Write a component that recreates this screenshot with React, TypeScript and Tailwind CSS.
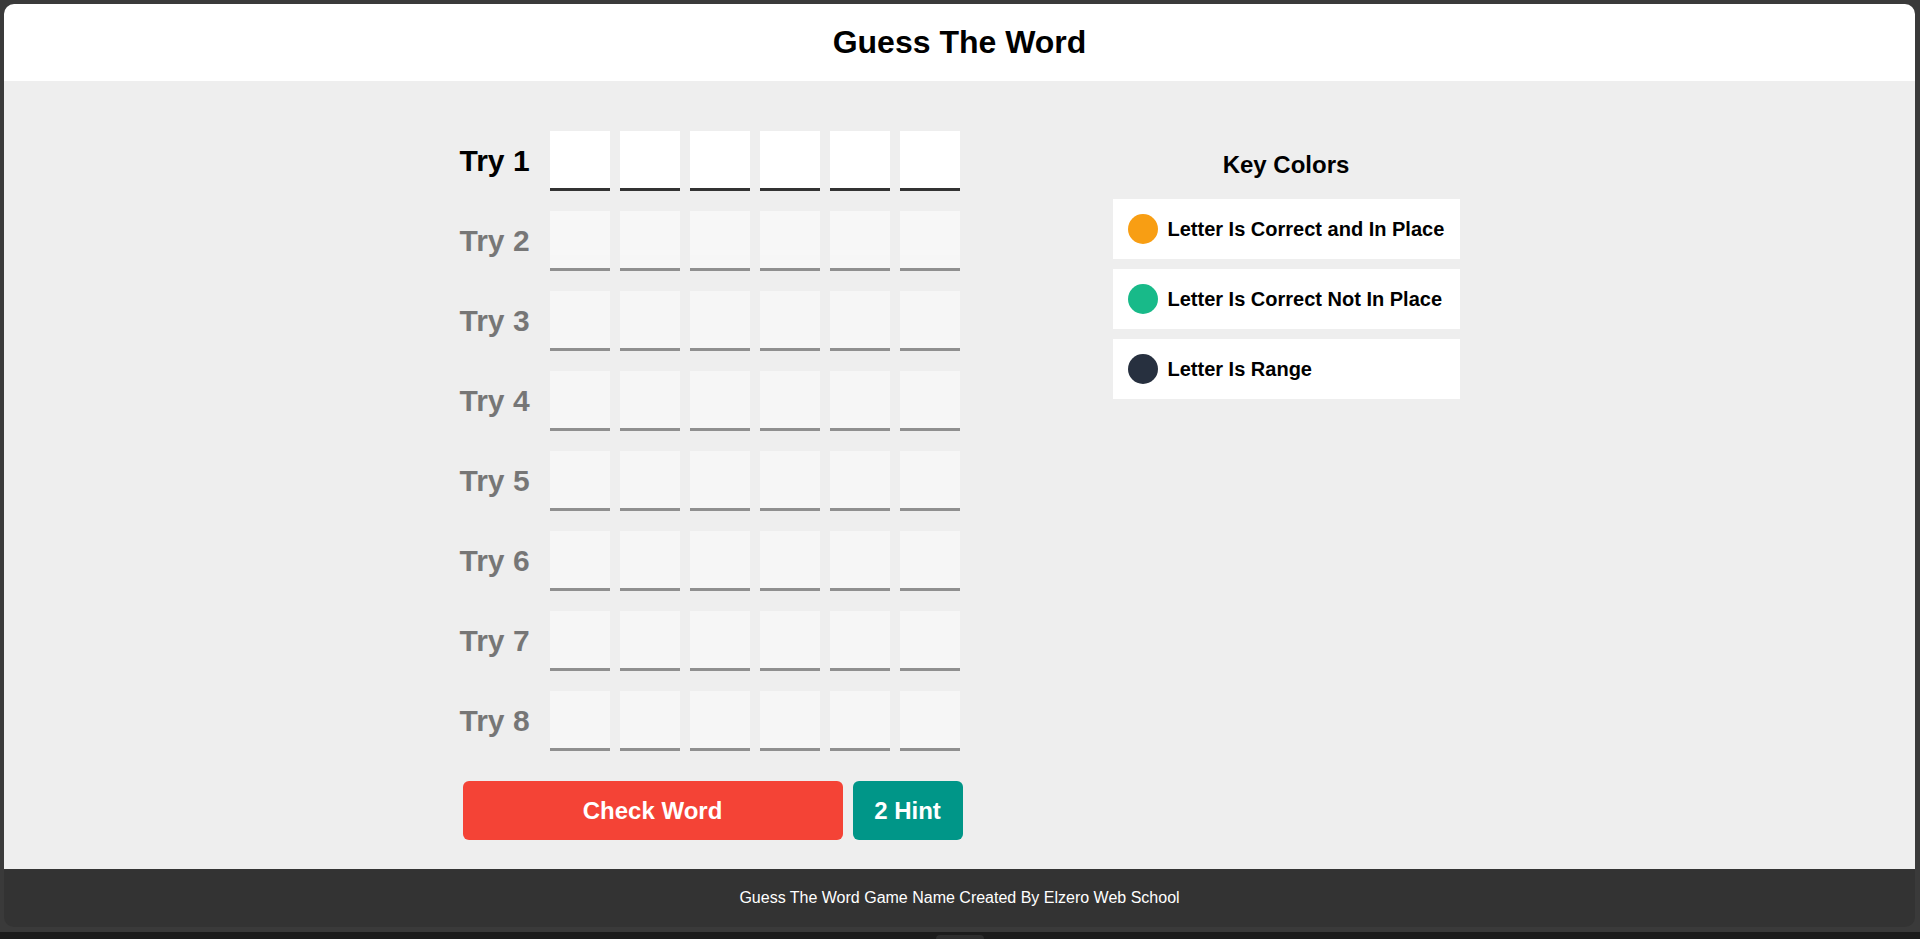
const tries = [1, 2, 3, 4, 5, 6, 7, 8];
const letters = [0, 1, 2, 3, 4, 5];

const keys = [
  { color: "bg-[#f89e13]", label: "Letter Is Correct and In Place" },
  { color: "bg-[#18ba89]", label: "Letter Is Correct Not In Place" },
  { color: "bg-[#27303f]", label: "Letter Is Range" },
];

const TryRow = ({ n }: { n: number }) => {
  const active = n === 1;
  return (
    <div className={`flex items-center ${active ? "" : "opacity-50"}`}>
      <span className="w-[90px] text-[30px] font-bold leading-[34px] text-black">Try {n}</span>
      <div className="flex gap-[10px]">
        {letters.map((i) => (
          <div key={i} className="h-[60px] w-[60px] border-b-[3px] border-[#333] bg-white" />
        ))}
      </div>
    </div>
  );
};

export default function App() {
  return (
    <div
      className="flex h-[939px] flex-col bg-[#3a3a3a] text-black"
      style={{ fontFamily: '"Liberation Sans", Arial, sans-serif' }}
    >
      <div className="flex flex-1 flex-col pt-[4px] pl-[4px] pr-[5px] pb-[5px]">
        <div className="flex flex-1 flex-col overflow-hidden rounded-[10px]">
          <header className="bg-white py-[20px] text-center">
            <h1 className="text-[32px] font-bold leading-[37px]">Guess The Word</h1>
          </header>

          <main className="flex-1 bg-[#eee] pt-[50px]">
            <div className="mx-auto flex w-[1000px] justify-between">
              <div className="flex flex-col">
                <div className="flex flex-col gap-[20px]">
                  {tries.map((n) => (
                    <TryRow key={n} n={n} />
                  ))}
                </div>
                <div className="ml-[3px] mt-[30px] flex gap-[10px]">
                  <button className="h-[59px] w-[380px] rounded-[6px] bg-[#f44336] text-[24px] font-bold text-white">
                    Check Word
                  </button>
                  <button className="h-[59px] w-[110px] rounded-[6px] bg-[#009688] text-[24px] font-bold text-white">
                    2 Hint
                  </button>
                </div>
              </div>

              <div className="w-[347px]">
                <h2 className="my-[20px] text-center text-[24px] font-bold leading-[28px]">Key Colors</h2>
                <div className="flex flex-col gap-[10px]">
                  {keys.map((k) => (
                    <div key={k.label} className="flex h-[60px] items-center gap-[10px] bg-white px-[15px]">
                      <span className={`h-[30px] w-[30px] rounded-full ${k.color}`} />
                      <span className="text-[20px] font-bold">{k.label}</span>
                    </div>
                  ))}
                </div>
              </div>
            </div>
          </main>

          <footer className="bg-[#333] py-[20px] text-center text-[16px] leading-[18px] text-white">
            Guess The Word Game Name Created By Elzero Web School
          </footer>
        </div>
      </div>
      <div className="flex h-[7px] justify-center bg-[#1c1c1c]">
        <div className="mt-[3px] h-[4px] w-[48px] rounded-t-[4px] bg-[#2e2e2e]" />
      </div>
    </div>
  );
}
